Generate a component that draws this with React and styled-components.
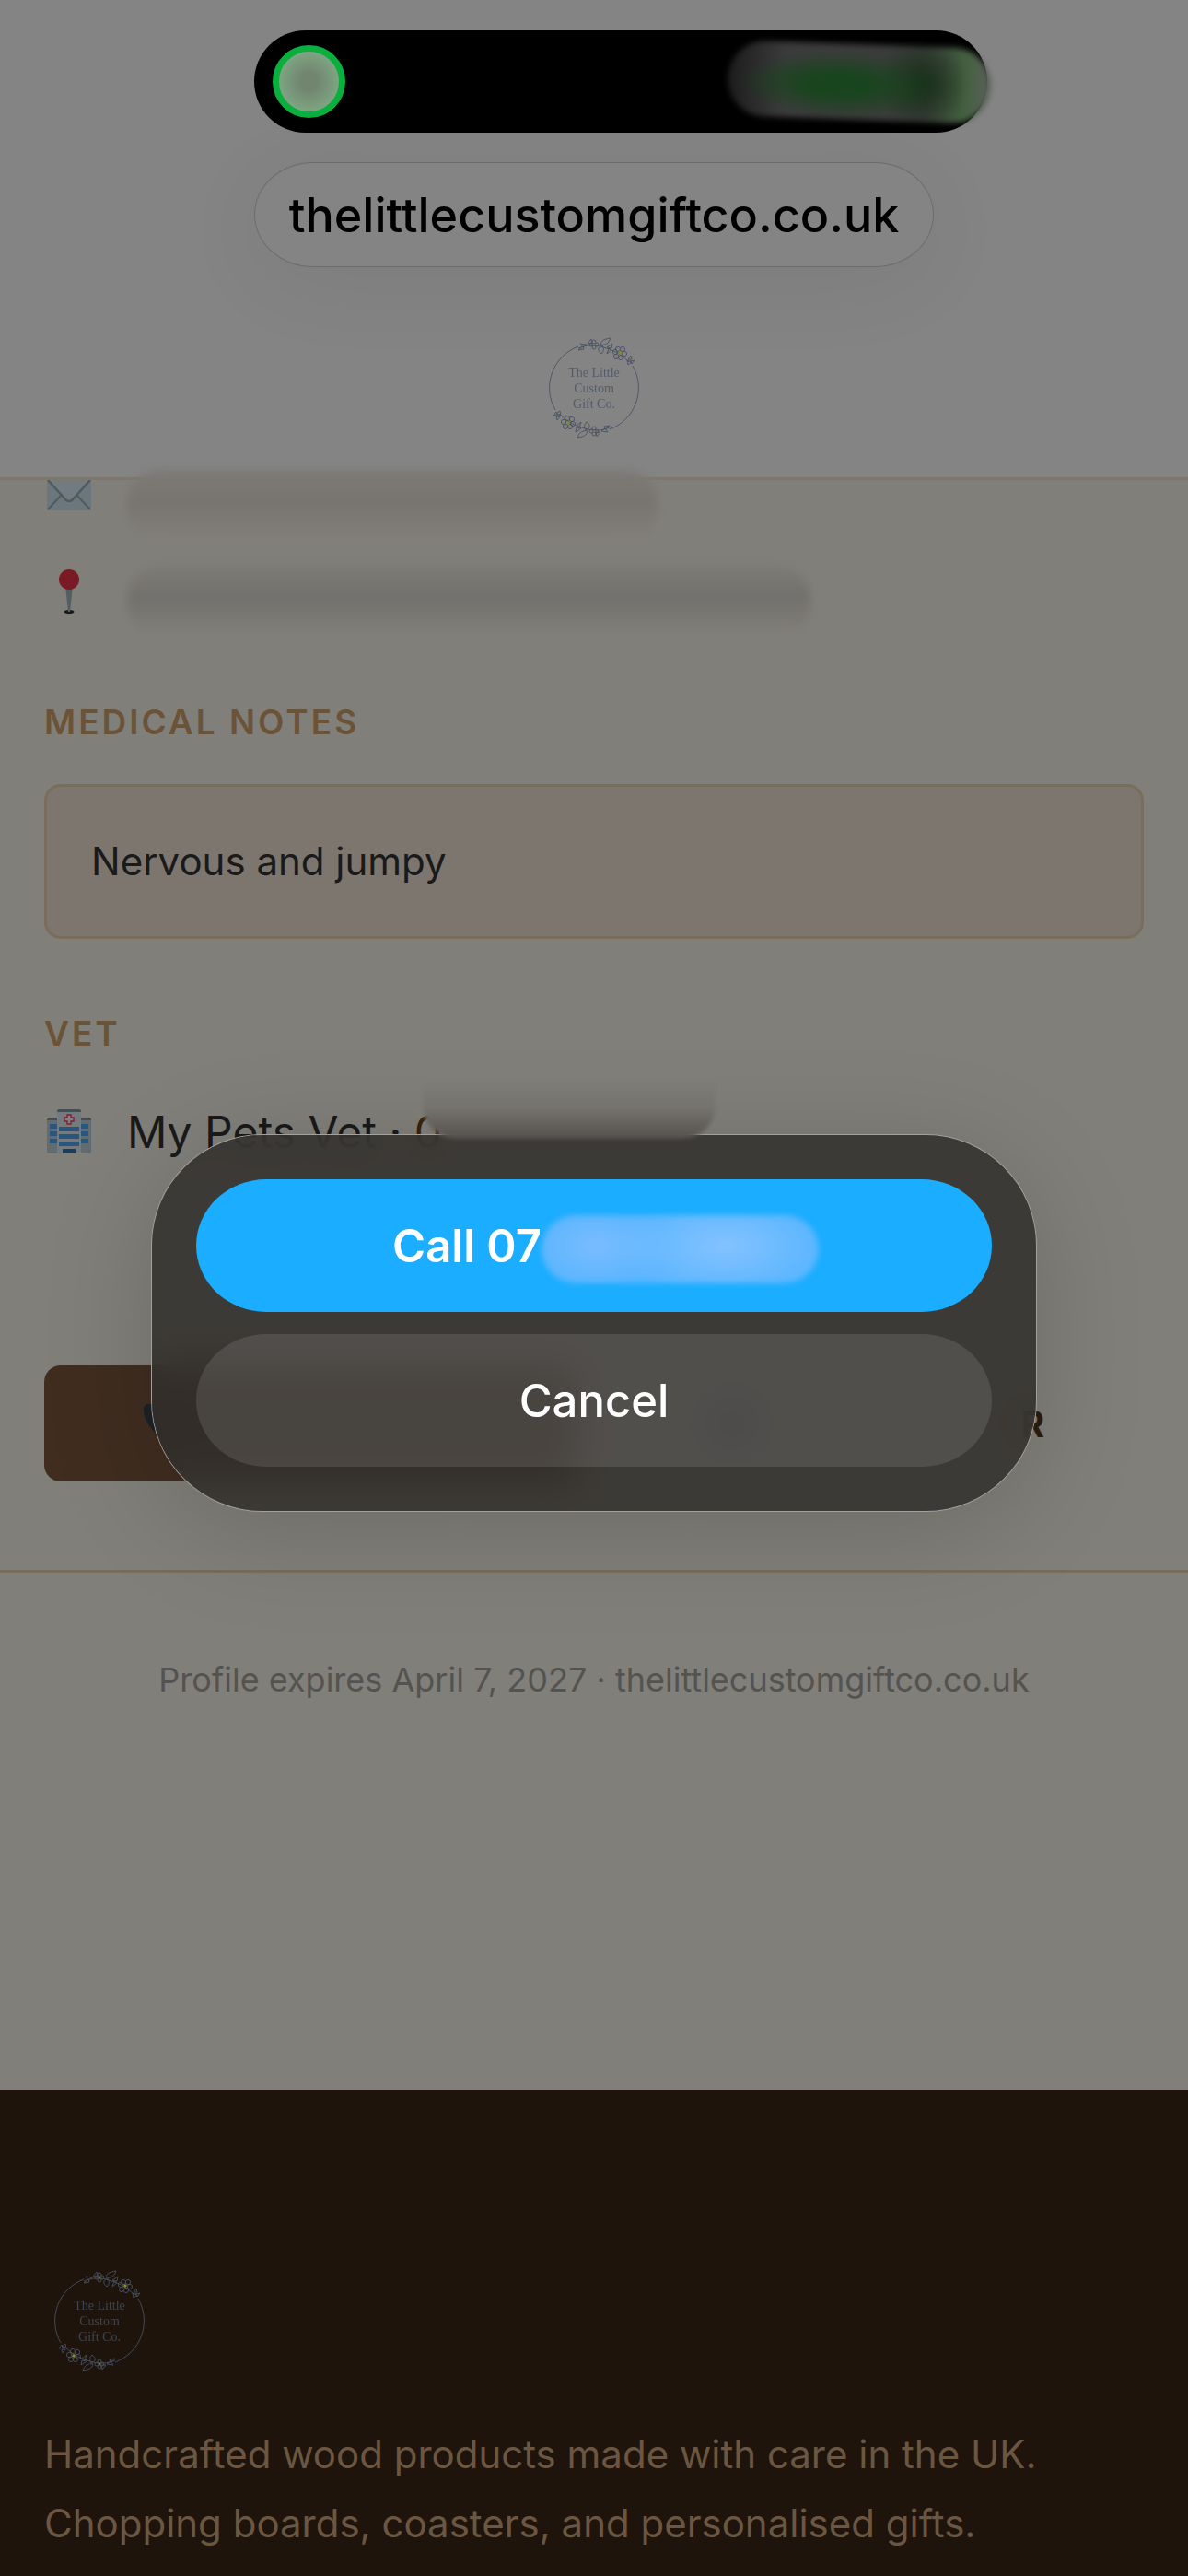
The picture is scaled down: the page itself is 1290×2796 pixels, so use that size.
import React, { useState } from 'react';
import styled, { createGlobalStyle } from 'styled-components';

const BlossomSprig = () => (
  <g transform="translate(-6 7)">
    <path d="M49 10 C58 6 68 6 76 9 C84 11 94 15 104 25" />
    {/* leaves */}
    <path d="M58 6 l-7 -1 l3 4 z M59 5 l4 -5 l1 5 z M54 8 l-5 4 l6 -1 z" />
    <path d="M73 6 c1 -5 5 -6 11 -7 c-2 6 -6 8 -11 7 z M75 7 c-6 2 -5 6 -1 9 c3 -3 3 -6 1 -9 z" />
    <path d="M80 9 l6 -4 l-1 5 z M82 10 l-2 6 l5 -4 z" />
    <path d="M103 22 l3 -4 l1 4 z M105 24 l5 -1 l-3 4 z M102 23 l1 5 l4 -3 z" />
    {/* small blossom */}
    <circle cx="66" cy="3" r="2" />
    <circle cx="63" cy="6" r="2" />
    <circle cx="69" cy="6" r="2" />
    <circle cx="66" cy="9" r="2" />
    {/* large blossom */}
    <circle cx="92" cy="11" r="2.6" />
    <circle cx="97" cy="11" r="2.6" />
    <circle cx="99" cy="16" r="2.6" />
    <circle cx="95" cy="20" r="2.6" />
    <circle cx="90" cy="19" r="2.6" />
    <circle cx="89" cy="14" r="2.6" />
    <circle cx="94" cy="15" r="1.8" fill="#8b8a1c" stroke="none" />
    <circle cx="66" cy="6" r="1" fill="#8b8a1c" stroke="none" />
  </g>
)

const Logo = ({ color }) => (
  <LogoSvg viewBox="0 0 120 120" role="img" aria-label="The Little Custom Gift Co." $color={color}>
    <g fill="none" stroke={color} strokeWidth="0.9">
      <path d="M43 15 A48 48 0 0 0 18 84" />
      <path d="M77 105 A48 48 0 0 0 102 36" />
      <BlossomSprig />
      <g transform="rotate(180 60 60)">
        <BlossomSprig />
      </g>
    </g>
    <text x="60" y="48">The Little</text>
    <text x="60" y="65">Custom</text>
    <text x="60" y="82">Gift Co.</text>
  </LogoSvg>
)

const EnvelopeIcon = () => (
  <Emoji viewBox="0 0 48 48">
    <rect x="0" y="6" width="48" height="34" rx="2" fill="#6c767d" />
    <path d="M1 39 L16 23 M47 39 L32 23" stroke="#4f5a60" strokeWidth="2" />
    <path d="M0 6 L20 28 Q24 32 28 28 L48 6 Z" fill="#727b80" />
    <path d="M1 7 L20 28 Q24 32 28 28 L47 7" fill="none" stroke="#4f5a60" strokeWidth="2.5" />
  </Emoji>
)

const PinIcon = () => (
  <Emoji viewBox="0 0 48 48">
    <ellipse cx="24" cy="46" rx="5.5" ry="2" fill="#17191a" />
    <path d="M20 18 h8 l-3 28 h-2 z" fill="#545d62" />
    <circle cx="24" cy="11" r="11" fill="#791a25" />
  </Emoji>
)

const HospitalIcon = () => (
  <Emoji viewBox="0 0 48 48">
    <path d="M0 11 h48 v35 q0 2 -2 2 h-44 q-2 0 -2 -2 z" fill="#626b70" />
    <path d="M0 12 q0 -3 2 -3 h44 q2 0 2 3 z" fill="#454e53" />
    <path d="M11 2 q0 -2 2 -2 h22 q2 0 2 2 v46 h-26 z" fill="#737b80" />
    <path d="M11 3 q0 -3 2 -3 h22 q2 0 2 3 z" fill="#454e53" />
    <path d="M22 6 h4 v3 h3 v4 h-3 v3 h-4 v-3 h-3 v-4 h3 z" fill="#7c8488" stroke="#85202b" strokeWidth="1.4" />
    <g fill="#28567c">
      <rect x="13" y="19" width="22" height="5" />
      <rect x="13" y="27" width="22" height="5" />
      <rect x="13" y="35" width="22" height="5" />
      <rect x="3" y="16" width="8" height="5" />
      <rect x="3" y="24" width="8" height="5" />
      <rect x="3" y="32" width="8" height="5" />
      <rect x="37" y="16" width="8" height="5" />
      <rect x="37" y="24" width="8" height="5" />
      <rect x="37" y="32" width="8" height="5" />
    </g>
    <rect x="17" y="43" width="14" height="5" fill="#1c3d5a" />
  </Emoji>
)

const PhoneIcon = () => (
  <Emoji viewBox="0 0 48 48">
    <path
      d="M0 9 C0 2 7 1 11 5 L16 14 L14 19 C17 25 20 30 28 34 L35 30 L45 38 L40 45 C20 46 0 26 0 9 Z"
      fill="#1c2226"
    />
  </Emoji>
)

const BubbleIcon = () => (
  <Emoji viewBox="0 0 48 48">
    <circle cx="24" cy="24" r="20" fill="#2d4a66" />
  </Emoji>
)

export default function App() {
  const [open, setOpen] = useState(true)

  return (
    <Page>
      <GlobalStyle />

      <Header>
        <HeaderInner>
          <Island>
            <CallDot />
            <IslandSmear />
          </Island>
          <AddressPill href="#top">thelittlecustomgiftco.co.uk</AddressPill>
          <Logo color="#485164" />
        </HeaderInner>
      </Header>

      <Profile>
        <List>
          <Row>
            <EnvelopeIcon />
            <Smear $width={576} $tone="#78746e" />
          </Row>
          <Row>
            <PinIcon />
            <Smear $width={742} $tone="#73716d" />
          </Row>
        </List>

        <Heading>MEDICAL NOTES</Heading>
        <Note>Nervous and jumpy</Note>

        <Heading>VET</Heading>
        <List>
          <Row>
            <HospitalIcon />
            <span>
              My Pets Vet · <PhoneLink href="#call">0</PhoneLink>
            </span>
          </Row>
        </List>

        <Actions>
          <ActionButton $filled aria-label="Call" onClick={() => setOpen(true)}>
            <PhoneIcon />
          </ActionButton>
          <ActionButton>
            <BubbleIcon />
            <span>R</span>
          </ActionButton>
        </Actions>
      </Profile>

      <Expiry>Profile expires April 7, 2027 · thelittlecustomgiftco.co.uk</Expiry>

      <Footer>
        <Logo color="#465062" />
        <p>
          Handcrafted wood products made with care in the UK.
          <br />
          Chopping boards, coasters, and personalised gifts.
        </p>
      </Footer>

      {open && (
        <Overlay>
          <Dialog role="dialog" aria-modal="true" aria-label="Call">
            <DialogButton $primary onClick={() => setOpen(false)}>
              Call 07
              <NumberSmear />
            </DialogButton>
            <DialogButton onClick={() => setOpen(false)}>Cancel</DialogButton>
            <EdgeSmear />
          </Dialog>
        </Overlay>
      )}
    </Page>
  )
}

const GlobalStyle = createGlobalStyle`
  * {
    box-sizing: border-box;
  }

  body {
    margin: 0;
    background: #1e140b;
    font-family: Inter, 'Liberation Sans', sans-serif;
    color: #1a1a1a;
  }

  button {
    border: none;
    font-family: inherit;
    cursor: pointer;
  }

  a {
    color: inherit;
    text-decoration: none;
  }
`

const Page = styled.div`
  min-height: 100vh;
  display: flex;
  flex-direction: column;
  background: #817f7a;
`

const Header = styled.header`
  position: relative;
  z-index: 1;
  padding: 33px 0 37px;
  background: #848484;
  border-bottom: 3px solid #7c786d;
`

const HeaderInner = styled.div`
  width: 738px;
  margin: 0 auto;
  display: flex;
  flex-direction: column;
  align-items: center;
`

const Island = styled.div`
  align-self: flex-start;
  width: 796px;
  height: 111px;
  padding: 0 20px;
  display: flex;
  align-items: center;
  justify-content: space-between;
  border-radius: 56px;
  background: #000;
`

const CallDot = styled.span`
  width: 79px;
  height: 79px;
  border: 7px solid #0aaf3e;
  border-radius: 50%;
  background: radial-gradient(circle, #72856f 20%, #7fa884 75%, #6fa878 100%);
`

const IslandSmear = styled.span`
  width: 286px;
  height: 82px;
  margin-right: -24px;
  border-radius: 41px;
  transform: rotate(2deg);
  filter: blur(3px);
  background:
    radial-gradient(ellipse 110px 36px at 42% 54%, #18451d 30%, transparent 100%),
    radial-gradient(ellipse 50px 50px at 74% 50%, #1a301b 10%, transparent 100%),
    linear-gradient(90deg, #1c1c1c 0%, #3c3b3c 22%, #3a3d3a 75%, #43603f 90%, #5c605c 100%);
`

const AddressPill = styled.a`
  width: 100%;
  height: 114px;
  margin-top: 32px;
  display: flex;
  align-items: center;
  justify-content: center;
  border: 1px solid #6c6c6c;
  border-radius: 64px / 57px;
  box-shadow: 0 16px 100px rgba(0, 0, 0, 0.06);
  color: #000;
  font-size: 52px;
  font-weight: 500;
`

const LogoSvg = styled.svg`
  width: 120px;
  height: 120px;
  margin-top: 71px;
  flex-shrink: 0;

  text {
    fill: ${({ $color }) => $color};
    font-family: 'Liberation Serif', serif;
    font-size: 14px;
    text-anchor: middle;
    opacity: 0.8;
  }
`

const Profile = styled.main`
  margin-top: -22px;
  padding: 0 48px 96px;
  border-bottom: 3px solid #796c5a;
`

const List = styled.ul`
  margin: 0;
  padding: 0;
  display: flex;
  flex-direction: column;
  gap: 26px;
  list-style: none;
`

const Row = styled.li`
  height: 78px;
  display: flex;
  align-items: center;
  gap: 39px;
  padding-left: 3px;
  font-size: 48px;
  white-space: nowrap;
`

const Emoji = styled.svg`
  width: 48px;
  height: 48px;
  flex-shrink: 0;
`

const Smear = styled.span`
  position: relative;
  z-index: 2;
  width: ${({ $width }) => $width}px;
  height: 78px;
  margin-top: 22px;
  flex-shrink: 0;
  border-radius: 36px;
  background: linear-gradient(#7d7b76, ${({ $tone }) => $tone} 45%, #817f7a 95%);
  filter: blur(4px);
`

const Heading = styled.h2`
  margin: 76px 0 40px;
  color: #6b5338;
  font-size: 37px;
  font-weight: 600;
  line-height: 54px;
  letter-spacing: 3px;
`

const Note = styled.p`
  margin: 0;
  padding: 48px;
  border: 3px solid #7a6d5b;
  border-radius: 18px;
  background: #7d766f;
  font-size: 42px;
  line-height: 66px;
`

const PhoneLink = styled.a`
  color: #3a230f;
`

const Actions = styled.div`
  margin-top: 215px;
  display: grid;
  grid-template-columns: 1fr 1fr;
  gap: 36px;
`

const ActionButton = styled.button`
  height: 126px;
  padding: 0 108px;
  display: flex;
  align-items: center;
  justify-content: space-between;
  border-radius: 18px;
  background: ${({ $filled }) => ($filled ? '#402d20' : 'transparent')};
  color: #2c1c0e;
  font-size: 39px;
  font-weight: 700;
`

const Expiry = styled.p`
  margin: 89px 0 418px;
  color: #545350;
  font-size: 36px;
  line-height: 54px;
  text-align: center;
`

const Footer = styled.footer`
  flex: 1;
  padding: 120px 48px 0;
  background: #1e140b;

  p {
    margin: 43px 0 0;
    color: #6a5641;
    font-size: 42px;
    line-height: 75px;
  }
`

const Overlay = styled.div`
  position: fixed;
  inset: 0;
  z-index: 3;
  padding-top: 76px;
  display: flex;
  align-items: center;
  justify-content: center;
`

const Dialog = styled.div`
  position: relative;
  width: 960px;
  padding: 48px;
  display: flex;
  flex-direction: column;
  gap: 24px;
  border-radius: 120px;
  background: rgba(48, 46, 42, 0.85);
  backdrop-filter: blur(20px);
  box-shadow: 0 0 0 1px #a3a19d, 0 20px 120px rgba(0, 0, 0, 0.16);
`

const DialogButton = styled.button`
  height: 144px;
  padding: 0;
  display: flex;
  align-items: center;
  justify-content: center;
  border-radius: 76px / 72px;
  background: ${({ $primary }) => ($primary ? '#1badff' : 'rgba(255, 255, 255, 0.11)')};
  color: #fff;
  font-size: 49px;
  font-weight: ${({ $primary }) => ($primary ? 600 : 500)};
`

const NumberSmear = styled.span`
  width: 301px;
  height: 74px;
  margin: 8px -25px 0 0;
  border-radius: 37px;
  filter: blur(3px);
  background:
    radial-gradient(ellipse 120px 60px at 66% 45%, #84c2ff, transparent 100%),
    radial-gradient(ellipse 80px 50px at 20% 45%, #7abcff, transparent 100%),
    #55b4ff;
`

const EdgeSmear = styled.span`
  position: absolute;
  top: -62px;
  left: 294px;
  width: 318px;
  height: 66px;
  border-radius: 0 0 36px 36px;
  background: linear-gradient(#807e79 0%, #75736e 50%, #55524e 100%);
  filter: blur(2px);
`
